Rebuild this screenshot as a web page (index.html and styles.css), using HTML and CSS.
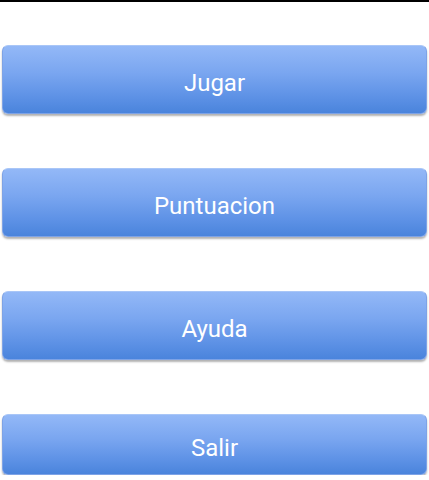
FILE: index.html
```html
<!DOCTYPE html>
<html lang="es">
<head>
  <meta charset="UTF-8">
  <meta name="viewport" content="width=device-width, initial-scale=1.0">
  <title>Menu</title>
  <link rel="stylesheet" href="styles.css">
</head>
<body>
  <div class="menu">
    <button class="btn">Jugar</button>
    <button class="btn">Puntuacion</button>
    <button class="btn">Ayuda</button>
    <button class="btn last">Salir</button>
  </div>
</body>
</html>
```
FILE: styles.css
```css
body { margin: 0; background: #ffffff; font-family: Roboto, "Noto Sans", Arial, sans-serif; border-top: 2px solid #000; overflow: hidden; }
.menu { display: flex; flex-direction: column; gap: 54px; padding: 43px 2px 0 2px; }
.btn {
  height: 69px;
  border: 1px solid #7ea3e6;
  border-top-color: #a9c6f7;
  border-radius: 6px;
  background: linear-gradient(to bottom, #93b8f7 0%, #7aa6f0 40%, #5e92e6 75%, #4a84dc 100%);
  box-shadow: 0 2px 2px rgba(0, 0, 0, 0.3);
  color: #ffffff;
  font-family: Roboto, "Noto Sans", Arial, sans-serif;
  font-size: 24px;
  padding: 7px 0 0 0;
  cursor: pointer;
}
.btn.last { height: 61px; }
```
